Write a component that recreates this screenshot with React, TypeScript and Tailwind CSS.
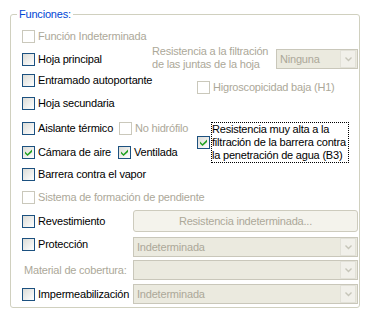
import React from "react";

const GRAY = "text-[#aca899]";

function Check({ checked = false, disabled = false }: { checked?: boolean; disabled?: boolean }) {
  return (
    <span
      className={`w-[13px] h-[13px] shrink-0 border flex items-center justify-center ${
        disabled ? "border-[#cac8bb] bg-white" : "border-[#1c5180] bg-linear-to-br from-[#dcdcd7] to-white"
      }`}
    >
      {checked && (
        <svg width="7" height="7" viewBox="0 0 7 7">
          <path d="M0 2.5 L2.5 5 L7 0.5 L7 3 L2.5 7 L0 4.5 Z" fill="#21a121" />
        </svg>
      )}
    </span>
  );
}

function CheckLabel({
  label,
  checked,
  disabled,
  className = "",
}: {
  label: string;
  checked?: boolean;
  disabled?: boolean;
  className?: string;
}) {
  return (
    <label className={`flex items-center gap-[3px] whitespace-nowrap ${className}`}>
      <Check checked={checked} disabled={disabled} />
      <span className={disabled ? GRAY : "text-black"}>{label}</span>
    </label>
  );
}

function Select({ value = "", className = "" }: { value?: string; className?: string }) {
  return (
    <div className={`h-[20px] flex items-center border border-[#c9c7ba] bg-[#ebeadf] ${className}`}>
      <span className={`flex-1 pl-[3px] ${GRAY}`}>{value}</span>
      <span className="w-[16px] h-[18px] mr-[1px] border border-[#e2e1d8] bg-[#f1f0ea] flex items-center justify-center">
        <svg width="7" height="5" viewBox="0 0 7 5">
          <path d="M0.5 0.5 L3.5 3.5 L6.5 0.5" stroke="#c6c5b9" strokeWidth="1.4" fill="none" />
        </svg>
      </span>
    </div>
  );
}

export default function App() {
  return (
    <div className="w-[372px] h-[319px] bg-white pt-[8px] pl-[10px] font-['Liberation_Sans',Arial,sans-serif] text-[11px] leading-[13px] tracking-[-0.2px]">
      <fieldset className="w-[350px] border border-[#d0d0bf] rounded-[3px] pl-[11px] pr-[1px] pb-[3px]">
        <legend className="ml-[-5px] px-[2px] text-[#0046d5]">Funciones:</legend>

        {/* fila 1 */}
        <div className="mt-[5px] h-[20px] flex items-center">
          <CheckLabel label="Función Indeterminada" disabled />
        </div>

        {/* hoja principal + resistencia juntas */}
        <div className="mt-[3px] h-[20px] flex items-center">
          <CheckLabel label="Hoja principal" className="w-[130px]" />
          <div className={`w-[124px] mb-[2px] ${GRAY}`}>
            Resistencia a la filtración
            <br />
            de las juntas de la hoja
          </div>
          <Select value="Ninguna" className="w-[82px]" />
        </div>

        <div className="mt-[1px] h-[20px] flex items-center">
          <CheckLabel label="Entramado autoportante" className="w-[175px]" />
          <CheckLabel label="Higroscopicidad baja (H1)" disabled className="mt-[14px]" />
        </div>

        <div className="mt-[3px] h-[20px] flex items-center">
          <CheckLabel label="Hoja secundaria" />
        </div>

        {/* aislante / cámara + B3 */}
        <div className="mt-[5px] flex">
          <div className="w-[175px] flex flex-col">
            <div className="h-[20px] flex items-center">
              <CheckLabel label="Aislante térmico" className="w-[97px]" />
              <CheckLabel label="No hidrófilo" disabled />
            </div>
            <div className="mt-[4px] h-[20px] flex items-center">
              <CheckLabel label="Cámara de aire" checked className="w-[96px]" />
              <CheckLabel label="Ventilada" checked />
            </div>
          </div>
          <div className="mt-[4px] flex items-center gap-[1px]">
            <Check checked />
            <div className="w-[138px] border border-dotted border-black text-black">
              Resistencia muy alta a la filtración de la barrera contra la penetración de agua (B3)
            </div>
          </div>
        </div>

        <div className="mt-[1px] h-[20px] flex items-center">
          <CheckLabel label="Barrera contra el vapor" />
        </div>

        <div className="mt-[3px] h-[20px] flex items-center">
          <CheckLabel label="Sistema de formación de pendiente" disabled />
        </div>

        {/* revestimiento */}
        <div className="mt-[3px] h-[22px] flex items-center">
          <CheckLabel label="Revestimiento" className="w-[111px]" />
          <div className={`w-[225px] h-[22px] border border-[#cdcbbd] rounded-[3px] bg-[#f4f3ec] flex items-center justify-center ${GRAY}`}>
            Resistencia indeterminada...
          </div>
        </div>

        <div className="mt-[5px] h-[20px] flex items-center">
          <CheckLabel label="Protección" className="w-[111px] mb-[5px]" />
          <Select value="Indeterminada" className="w-[225px]" />
        </div>

        <div className="mt-[3px] h-[20px] flex items-center">
          <span className={`w-[111px] pl-[2px] ${GRAY}`}>Material de cobertura:</span>
          <Select className="w-[225px]" />
        </div>

        <div className="mt-[4px] h-[20px] flex items-center">
          <CheckLabel label="Impermeabilización" className="w-[111px]" />
          <Select value="Indeterminada" className="w-[225px]" />
        </div>
      </fieldset>
    </div>
  );
}
